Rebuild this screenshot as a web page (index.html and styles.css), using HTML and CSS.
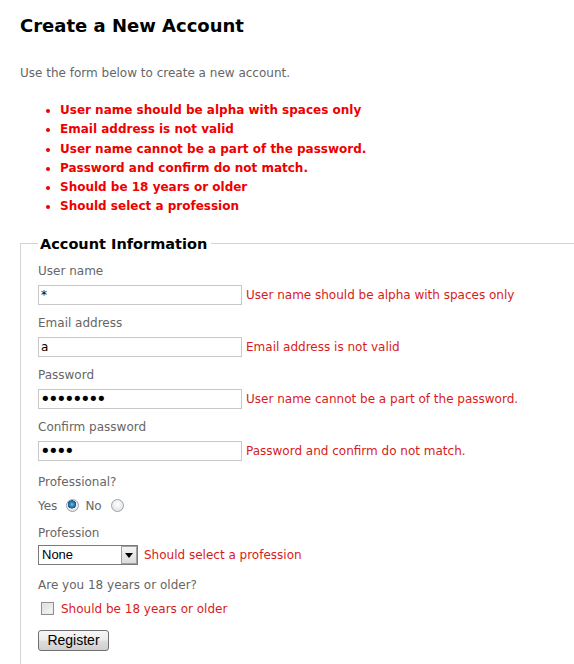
FILE: index.html
```html
<!DOCTYPE html>
<html lang="en">
<head>
<meta charset="utf-8">
<title>Create a New Account</title>
<link rel="stylesheet" href="styles.css">
</head>
<body>
<h2 class="title">Create a New Account</h2>
<p class="intro">Use the form below to create a new account.</p>
<ul class="summary">
  <li>User name should be alpha with spaces only</li>
  <li>Email address is not valid</li>
  <li>User name cannot be a part of the password.</li>
  <li>Password and confirm do not match.</li>
  <li>Should be 18 years or older</li>
  <li>Should select a profession</li>
</ul>
<form class="form" onsubmit="return false">
<fieldset class="account">
  <legend class="legend">Account Information</legend>
  <div class="field">
    <label class="lbl" for="un">User name</label>
    <div class="row"><input class="txt" id="un" type="text" value="*"><span class="err">User name should be alpha with spaces only</span></div>
  </div>
  <div class="field">
    <label class="lbl" for="em">Email address</label>
    <div class="row"><input class="txt" id="em" type="text" value="a"><span class="err">Email address is not valid</span></div>
  </div>
  <div class="field">
    <label class="lbl" for="pw">Password</label>
    <div class="row"><input class="txt pwd" id="pw" type="password" value="12345678"><span class="err">User name cannot be a part of the password.</span></div>
  </div>
  <div class="field">
    <label class="lbl" for="cp">Confirm password</label>
    <div class="row"><input class="txt pwd" id="cp" type="password" value="1234"><span class="err">Password and confirm do not match.</span></div>
  </div>
  <div class="field field-pro">
    <span class="lbl">Professional?</span>
    <div class="row radios">
      <label class="opt" for="py">Yes</label><input class="radio" type="radio" name="pro" id="py" checked>
      <label class="opt" for="pn">No</label><input class="radio" type="radio" name="pro" id="pn">
    </div>
  </div>
  <div class="field field-prof">
    <label class="lbl" for="pf">Profession</label>
    <div class="row"><span class="selectbox"><select class="sel" id="pf"><option>None</option></select><span class="arrow"></span></span><span class="err">Should select a profession</span></div>
  </div>
  <div class="field">
    <span class="lbl">Are you 18 years or older?</span>
    <div class="row checkrow"><input class="check" type="checkbox" id="ag"><span class="err">Should be 18 years or older</span></div>
  </div>
  <div class="actions"><button class="btn" type="submit">Register</button></div>
</fieldset>
</form>
</body>
</html>
```

FILE: styles.css
```css
html { overflow-x: hidden; }
body {
  margin: 0;
  padding: 0 0 0 20px;
  background: #fff;
  font-family: "DejaVu Sans", Verdana, sans-serif;
  color: #666;
  font-size: 12px;
}
.title {
  margin: 14px 0 0;
  font-size: 18px;
  line-height: 24px;
  color: #000;
  font-weight: bold;
}
.intro {
  margin: 27px 0 0;
  font-size: 12px;
  line-height: 16px;
  color: #666;
}
.summary {
  margin: 20px 0 0;
  padding-left: 40px;
  color: #e00;
  font-weight: bold;
  font-size: 12px;
  line-height: 19.3px;
}
.form { margin: 0; }
.account {
  margin: 19px 0 0 0;
  padding: 10px 0 20px 17px;
  border: 0;
  border-top: 1px solid #d3d3d3;
  border-left: 1px solid #d3d3d3;
  min-width: 0;
}
.legend {
  padding: 0 4px 0 2px;
  margin-left: 0;
  font-size: 14.5px;
  font-weight: bold;
  color: #000;
}
.field { margin-bottom: 9px; }
.lbl {
  display: block;
  line-height: 18px;
  margin-bottom: 5px;
  color: #666;
}
.row {
  display: flex;
  align-items: center;
  gap: 4px;
}
.txt {
  box-sizing: border-box;
  width: 204px;
  height: 20px;
  margin: 0;
  padding: 0 2px;
  border: 1px solid #c8c8c8;
  font-family: "DejaVu Sans", Verdana, sans-serif;
  font-size: 12px;
  color: #000;
  outline: none;
}
.pwd { font-size: 18px; letter-spacing: -2.6px; padding-left: 1px; }
.err {
  color: #d81b1b;
  line-height: 16px;
}
.field-pro { margin-top: 12px; margin-bottom: 8px; }
.radios { gap: 0; height: 20px; }
.opt { color: #666; margin-right: 9px; }
.radio {
  appearance: none;
  -webkit-appearance: none;
  width: 13px;
  height: 13px;
  margin: 0 6px 0 0;
  border-radius: 50%;
  border: 1px solid #9aa2ab;
  background: radial-gradient(circle at 50% 40%, #fff 0, #e6e6e6 70%, #d4d4d4 100%);
  box-sizing: border-box;
}
.radio:checked {
  background:
    radial-gradient(circle at 45% 40%, #6ec0ef 0, #2a7ab8 2.5px, #1d4f7d 4px, transparent 4.3px),
    radial-gradient(circle at 50% 40%, #fff 0, #e6e6e6 70%, #d4d4d4 100%);
}
.field-prof { margin-bottom: 11px; }
.field-prof .lbl { margin-bottom: 3px; }
.field-prof .row { gap: 6px; }
.selectbox {
  position: relative;
  display: inline-block;
  width: 100px;
  height: 20px;
}
.sel {
  appearance: none;
  -webkit-appearance: none;
  box-sizing: border-box;
  width: 100px;
  height: 20px;
  margin: 0;
  padding: 0 0 0 3px;
  border: 1px solid #7a7a7a;
  border-radius: 0;
  background: #fff;
  font-family: "Liberation Sans", Arial, sans-serif;
  font-size: 13px;
  color: #000;
}
.arrow {
  position: absolute;
  right: 1px;
  top: 1px;
  width: 16px;
  height: 18px;
  box-sizing: border-box;
  border: 1px solid #a0a0a0;
  background: linear-gradient(#f4f4f4, #dcdcdc);
  pointer-events: none;
}
.arrow::after {
  content: "";
  position: absolute;
  left: 3px;
  top: 6px;
  border-left: 4px solid transparent;
  border-right: 4px solid transparent;
  border-top: 5px solid #000;
}
.checkrow { height: 20px; padding-left: 3px; gap: 7px; }
.check {
  appearance: none;
  -webkit-appearance: none;
  width: 13px;
  height: 13px;
  margin: 0;
  border: 1px solid #8f8f8f;
  box-sizing: border-box;
  background: linear-gradient(135deg, #dcdcdc, #f8f8f8);
  box-shadow: inset 0 0 0 1px #e8e8e8;
}
.actions { margin-top: 11px; }
.btn {
  box-sizing: border-box;
  width: 71px;
  height: 21px;
  padding: 0;
  border: 1px solid #707070;
  border-radius: 3px;
  background: linear-gradient(#f6f6f6 0, #ececec 48%, #dddddd 52%, #cfcfcf 100%);
  font-family: "Liberation Sans", Arial, sans-serif;
  font-size: 14px;
  color: #000;
}
```
